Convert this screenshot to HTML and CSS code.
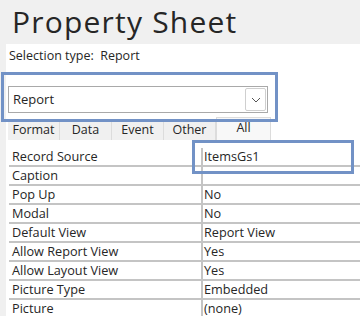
FILE: index.html
```html
<!DOCTYPE html>
<html lang="en">
<head>
    <meta charset="UTF-8">
    <title>Property Sheet</title>
    <link rel="stylesheet" href="styles.css">
</head>
<body>
    <div class="header">
        <h1 class="title">Property Sheet</h1>
    </div>

    <div class="panel">
        <div class="selection">Selection type:&nbsp; Report</div>

        <div class="combo">
            <span class="combo-text">Report</span>
            <span class="combo-btn">
                <svg width="10" height="6" viewBox="0 0 10 6">
                    <polyline points="1,1 5,5 9,1" fill="none" stroke="#555" stroke-width="1"/>
                </svg>
            </span>
        </div>

        <div class="tabs">
            <div class="tab">Format</div>
            <div class="tab">Data</div>
            <div class="tab">Event</div>
            <div class="tab">Other</div>
            <div class="tab active">All</div>
        </div>

        <div class="grid">
            <div class="row first"><div class="label">Record Source</div><div class="value">ItemsGs1</div></div>
            <div class="row"><div class="label">Caption</div><div class="value"></div></div>
            <div class="row"><div class="label">Pop Up</div><div class="value">No</div></div>
            <div class="row"><div class="label">Modal</div><div class="value">No</div></div>
            <div class="row"><div class="label">Default View</div><div class="value">Report View</div></div>
            <div class="row"><div class="label">Allow Report View</div><div class="value">Yes</div></div>
            <div class="row"><div class="label">Allow Layout View</div><div class="value">Yes</div></div>
            <div class="row"><div class="label">Picture Type</div><div class="value">Embedded</div></div>
            <div class="row"><div class="label">Picture</div><div class="value">(none)</div></div>
        </div>
    </div>

    <!-- marcas azules sobre el contenido -->
    <div class="mark mark-combo"></div>
    <div class="mark mark-source"></div>
</body>
</html>
```

FILE: styles.css
```css
/* General */
body {
    margin: 0;
    background-color: #f0f0f0;
    font-family: "Open Sans", "Noto Sans", sans-serif;
    color: #262626;
    position: relative;
    height: 316px;
    overflow: hidden;
}

/* Cabecera */
.header {
    height: 44px;
}

.title {
    margin: 0;
    padding-left: 12px;
    font-size: 30px;
    font-weight: 400;
    line-height: 44px;
    color: #262626;
    letter-spacing: 1.2px;
}

/* Panel blanco */
.panel {
    margin-left: 6px;
    background-color: #fff;
    height: 272px;
}

.selection {
    padding: 4px 0 0 3px;
    font-size: 12.5px;
    line-height: 16px;
}

/* Combo */
.combo {
    margin: 22px 0 0 2px;
    width: 260px;
    height: 27px;
    box-sizing: border-box;
    border: 1px solid #a9a9a9;
    padding: 1px;
    display: flex;
    align-items: stretch;
}

.combo-text {
    flex: 1;
    padding-left: 3px;
    font-size: 13px;
    line-height: 23px;
}

.combo-btn {
    width: 21px;
    box-sizing: border-box;
    border: 1px solid #cfcfcf;
    border-radius: 2px;
    display: flex;
    align-items: center;
    justify-content: center;
}

/* Pestañas */
.tabs {
    margin: 4px 0 0 2px;
    height: 23px;
    display: flex;
    align-items: flex-end;
}

.tab {
    width: 52px;
    height: 20px;
    box-sizing: border-box;
    background-color: #f0f0f0;
    border-right: 1px solid #dcdcdc;
    font-size: 12.5px;
    line-height: 20px;
    text-align: center;
}

.tab.active {
    width: 55px;
    height: 23px;
    background-color: #f8f8f8;
    border: 1px solid #dcdcdc;
    border-bottom: none;
    line-height: 19px;
}

/* Tabla de propiedades */
.grid {
    margin: 3px 0 0 3px;
}

.row {
    display: flex;
    height: 19px;
    box-sizing: border-box;
    border-bottom: 2px solid #c4c4c4;
    font-size: 12.7px;
    line-height: 17px;
}

.row.first {
    height: 24px;
    padding-top: 5px;
}

.label {
    width: 192px;
    padding-left: 3px;
    box-sizing: border-box;
}

.value {
    flex: 1;
    border-left: 2px solid #c4c4c4;
    padding-left: 1px;
}

/* Marcas azules */
.mark {
    position: absolute;
    border: 3px solid #7292c6;
    box-sizing: border-box;
}

.mark-combo {
    left: 1px;
    top: 72px;
    width: 277px;
    height: 50px;
}

.mark-source {
    left: 192px;
    top: 140px;
    width: 162px;
    height: 34px;
}
```
